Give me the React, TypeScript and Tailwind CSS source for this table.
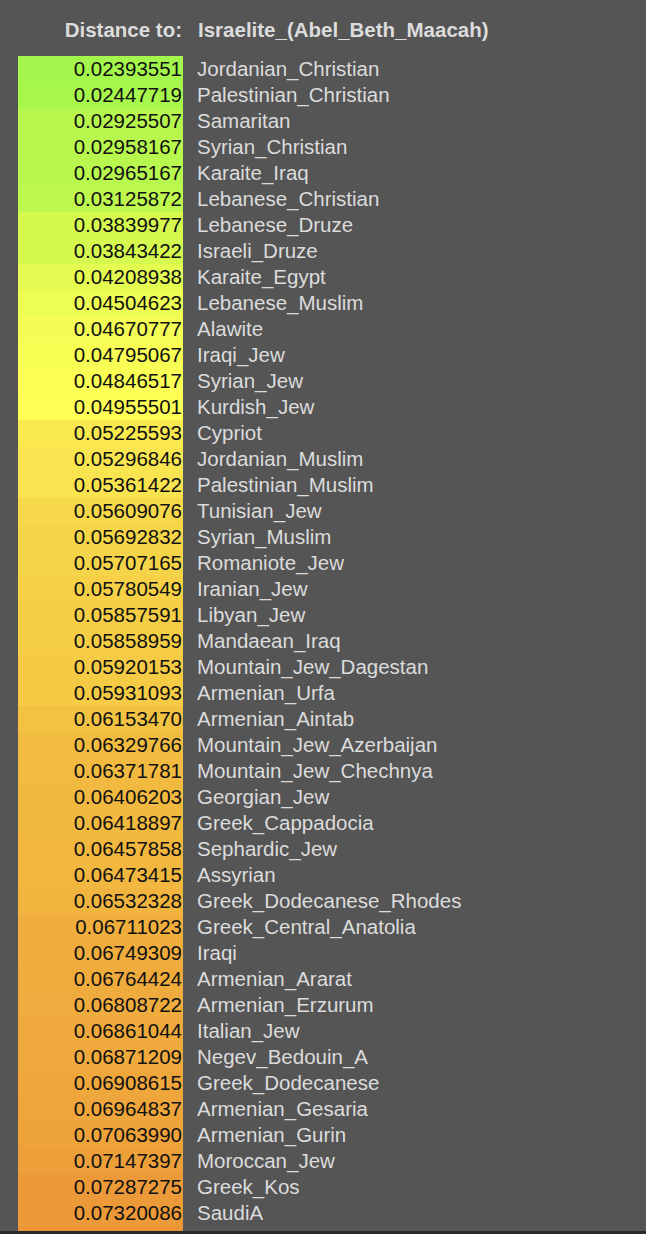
import React from "react";

const rows: [string, string][] = [
  ["0.02393551", "Jordanian_Christian"],
  ["0.02447719", "Palestinian_Christian"],
  ["0.02925507", "Samaritan"],
  ["0.02958167", "Syrian_Christian"],
  ["0.02965167", "Karaite_Iraq"],
  ["0.03125872", "Lebanese_Christian"],
  ["0.03839977", "Lebanese_Druze"],
  ["0.03843422", "Israeli_Druze"],
  ["0.04208938", "Karaite_Egypt"],
  ["0.04504623", "Lebanese_Muslim"],
  ["0.04670777", "Alawite"],
  ["0.04795067", "Iraqi_Jew"],
  ["0.04846517", "Syrian_Jew"],
  ["0.04955501", "Kurdish_Jew"],
  ["0.05225593", "Cypriot"],
  ["0.05296846", "Jordanian_Muslim"],
  ["0.05361422", "Palestinian_Muslim"],
  ["0.05609076", "Tunisian_Jew"],
  ["0.05692832", "Syrian_Muslim"],
  ["0.05707165", "Romaniote_Jew"],
  ["0.05780549", "Iranian_Jew"],
  ["0.05857591", "Libyan_Jew"],
  ["0.05858959", "Mandaean_Iraq"],
  ["0.05920153", "Mountain_Jew_Dagestan"],
  ["0.05931093", "Armenian_Urfa"],
  ["0.06153470", "Armenian_Aintab"],
  ["0.06329766", "Mountain_Jew_Azerbaijan"],
  ["0.06371781", "Mountain_Jew_Chechnya"],
  ["0.06406203", "Georgian_Jew"],
  ["0.06418897", "Greek_Cappadocia"],
  ["0.06457858", "Sephardic_Jew"],
  ["0.06473415", "Assyrian"],
  ["0.06532328", "Greek_Dodecanese_Rhodes"],
  ["0.06711023", "Greek_Central_Anatolia"],
  ["0.06749309", "Iraqi"],
  ["0.06764424", "Armenian_Ararat"],
  ["0.06808722", "Armenian_Erzurum"],
  ["0.06861044", "Italian_Jew"],
  ["0.06871209", "Negev_Bedouin_A"],
  ["0.06908615", "Greek_Dodecanese"],
  ["0.06964837", "Armenian_Gesaria"],
  ["0.07063990", "Armenian_Gurin"],
  ["0.07147397", "Moroccan_Jew"],
  ["0.07287275", "Greek_Kos"],
  ["0.07320086", "SaudiA"],
  ["0.07425424", "Yemenite_Jew"],
  ["0.07512380", "Egyptian"],
];

const stops: [number, number[]][] = [
  [0.0239, [165, 246, 76]],
  [0.0384, [214, 249, 80]],
  [0.0496, [255, 255, 85]],
  [0.0523, [250, 232, 80]],
  [0.0615, [243, 194, 66]],
  [0.0735, [236, 152, 56]],
];

function colorFor(v: number): string {
  if (v <= stops[0][0]) return `rgb(${stops[0][1].join(",")})`;
  for (let i = 0; i < stops.length - 1; i++) {
    const [a, ca] = stops[i];
    const [b, cb] = stops[i + 1];
    if (v <= b) {
      const t = (v - a) / (b - a);
      const c = ca.map((x, k) => Math.round(x + (cb[k] - x) * t));
      return `rgb(${c.join(",")})`;
    }
  }
  const last = stops[stops.length - 1];
  const prev = stops[stops.length - 2];
  const t = (v - last[0]) / (last[0] - prev[0]);
  const c = last[1].map((x, k) => Math.round(x + (x - prev[1][k]) * t));
  return `rgb(${c.join(",")})`;
}

export default function App() {
  return (
    <div
      className="min-h-[1234px] w-full bg-[#555555] pt-[17px]"
      style={{ fontFamily: '"Liberation Sans", Arial, sans-serif' }}
    >
      <div className="flex h-[26px] items-center text-[20.5px] font-bold leading-[26px] text-[#dcdcdc]">
        <div className="w-[182px] text-right">Distance to:</div>
        <div className="pl-[16px]">Israelite_(Abel_Beth_Maacah)</div>
      </div>
      <div className="mt-[13px] flex flex-col">
        {rows.map(([v, name]) => (
          <div key={name} className="flex h-[26px] items-center text-[20.5px] leading-[26px]">
            <div className="ml-[18px] w-[165px] self-stretch pr-[1px] text-right text-[#111111]" style={{ backgroundColor: colorFor(parseFloat(v)) }}>
              {v}
            </div>
            <div className="pl-[14px] text-[#dcdcdc]">{name}</div>
          </div>
        ))}
      </div>
      <div className="fixed bottom-0 left-0 h-[3px] w-full bg-[#2a2a2a]" />
    </div>
  );
}
